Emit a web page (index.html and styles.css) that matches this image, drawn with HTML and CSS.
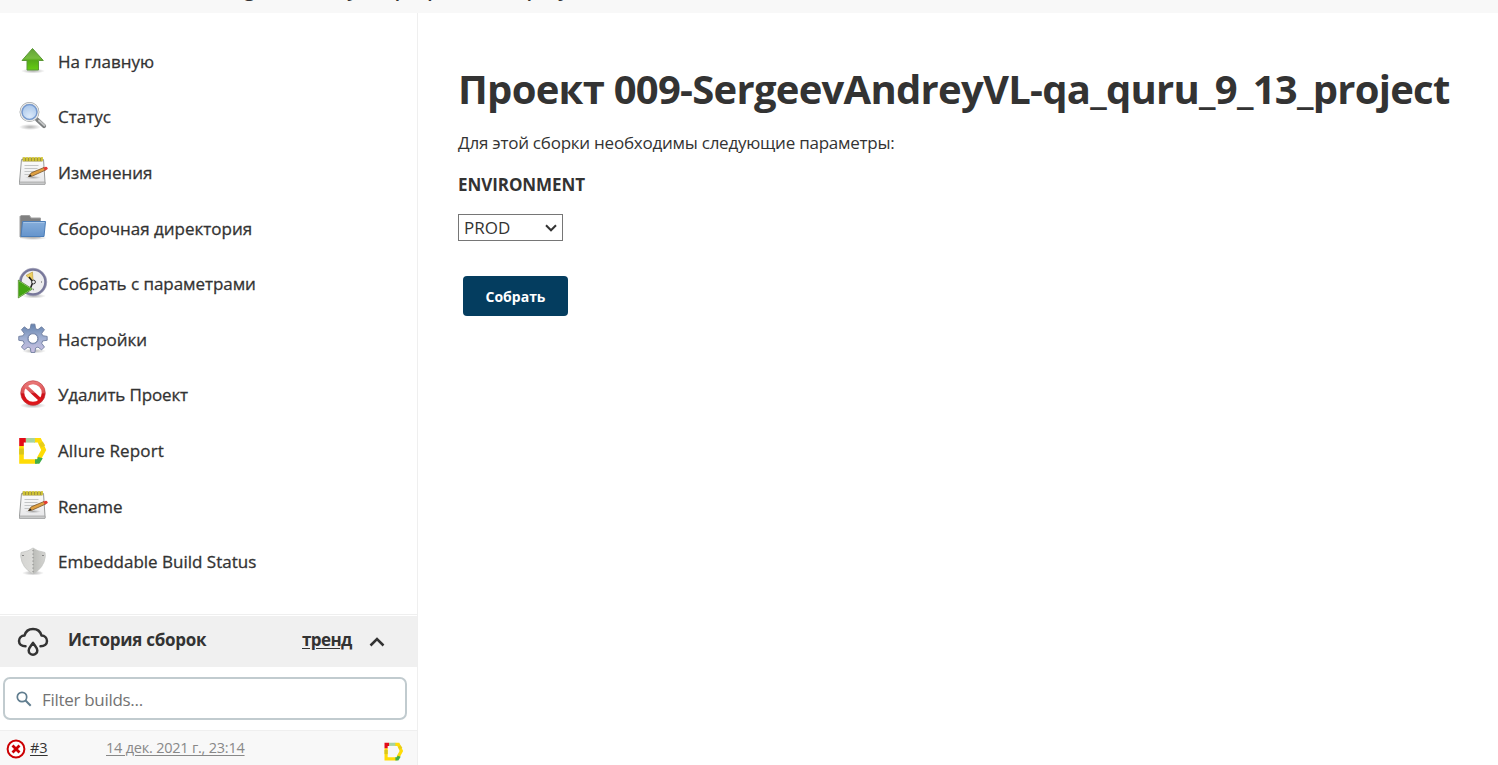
FILE: index.html
```
<!DOCTYPE html>
<html lang="ru">
<head>
<meta charset="utf-8">
<title>Проект 009-SergeevAndreyVL-qa_quru_9_13_project</title>
<link rel="stylesheet" href="styles.css">
</head>
<body>
<svg class="defs" width="0" height="0">
  <defs>
    <linearGradient id="green" x1="0" y1="0" x2="0" y2="1"><stop offset="0" stop-color="#62a238"/><stop offset=".45" stop-color="#78bd40"/><stop offset=".55" stop-color="#55aa18"/><stop offset="1" stop-color="#65cd12"/></linearGradient>
    <radialGradient id="lens" cx=".5" cy=".75" r=".7"><stop offset="0" stop-color="#dceafa"/><stop offset="1" stop-color="#a5c3e8"/></radialGradient>
    <linearGradient id="paper" x1="0" y1="0" x2="0" y2="1"><stop offset="0" stop-color="#fcfcfc"/><stop offset="1" stop-color="#e6e6e8"/></linearGradient>
    <linearGradient id="folder" x1="0" y1="0" x2="0" y2="1"><stop offset="0" stop-color="#86aedb"/><stop offset="1" stop-color="#6594cc"/></linearGradient>
    <linearGradient id="gear" x1="0" y1="0" x2="0" y2="1"><stop offset="0" stop-color="#6482ae"/><stop offset=".5" stop-color="#a1b0d2"/><stop offset="1" stop-color="#cbc0e2"/></linearGradient>
    <linearGradient id="stop" x1="0" y1="0" x2="0" y2="1"><stop offset="0" stop-color="#e87575"/><stop offset=".48" stop-color="#dc4d50"/><stop offset=".55" stop-color="#cd1119"/><stop offset="1" stop-color="#df161b"/></linearGradient>
    <linearGradient id="shield" x1="0" y1="0" x2="1" y2="0"><stop offset="0" stop-color="#d5d5d2"/><stop offset=".5" stop-color="#dcdcd9"/><stop offset=".52" stop-color="#bcbdb9"/><stop offset="1" stop-color="#d4d4d1"/></linearGradient>
    <radialGradient id="shade"><stop offset="0" stop-color="#000" stop-opacity=".3"/><stop offset="1" stop-color="#000" stop-opacity="0"/></radialGradient>
    <symbol id="notepad" viewBox="0 0 32 32">
      <path d="M4.500 3.500h22l1.500 22.500v2H2.500v-2z" fill="url(#paper)" stroke="#999b9b"/>
      <path d="M2.500 26h25.500v2.500H2.500z" fill="#c8c9ca" stroke="#a0a2a2" stroke-width=".7"/>
      <path d="M7.500 9.500h14M7.500 12.500h13M7.500 15.500h12M7.500 18.500h6" stroke="#c3c5c6"/>
      <path d="M5.500 1.500h20v4h-20z" fill="#a0943a"/>
      <path d="M7 1v4M10 1v4M13 1v4M16 1v4M19 1v4M22 1v4M25 1v4" stroke="#d9cc35" stroke-width="1.600"/>
      <ellipse cx="16" cy="21.500" rx="8" ry="1.600" fill="url(#shade)"/>
      <path d="M11.500 20.500l2.800-3.700L27 11.500l1.700 2.500-13.200 6z" fill="#dfa043" stroke="#79552b" stroke-width=".8"/>
      <path d="M11.200 21l2-2.500 1.600 1.800z" fill="#222"/>
      <path d="M26.200 11.700l2-.8q2-.3 2.400 1.300l-.4 1.200-2.200 1z" fill="#e33b34"/>
    </symbol>
    <symbol id="allure" viewBox="0 0 32 32">
      <path d="M4.500 12v15.500H20" fill="none" stroke="#ffdc05" stroke-width="4.600"/>
      <path d="M2.200 14.500h4.600v6H2.200z" fill="#d9c61c"/>
      <path d="M17 6.300h5.300L26.700 16l-5 9" fill="none" stroke="#ffdc05" stroke-width="4.600"/>
      <path d="M21.700 10l4-2.500 2.500 4-4 2z" fill="#e8cd19"/>
      <path d="M8.500 4H18v4.600H8.500z" fill="#a6d3a1"/>
      <path d="M2.200 4h6.600v4.600H6.800V12H2.200z" fill="#e30b17"/>
      <path d="M18 29.800v-4.600h2l1.300-2.300 4.500 1.300-3.500 5.600z" fill="#42ae49"/>
    </symbol>
  </defs>
</svg>

<header class="breadcrumbs"><span class="crumb">009-SergeevAndreyVL-qa_quru_9_13_project</span></header>
<div class="page">
  <aside class="side">
    <nav class="tasks">
      <a class="task"><svg viewBox="0 0 32 32"><ellipse cx="16" cy="26" rx="12" ry="2.500" fill="url(#shade)"/><path d="M15.500 3.500L26.300 15.500H21.500v9.500H10V15.500H5z" fill="url(#green)" stroke="#5b9836"/></svg><span class="label l1">На главную</span></a>
      <a class="task"><svg viewBox="0 0 32 32"><ellipse cx="13" cy="27" rx="11" ry="3" fill="url(#shade)"/><path d="M20 19.500l7 6.500" stroke="#7c7f80" stroke-width="4.200" stroke-linecap="round"/><path d="M22 20.500l5.500 5" stroke="#c4c6c6" stroke-width="1.800" stroke-linecap="round"/><circle cx="12.500" cy="12" r="8.800" fill="url(#lens)" stroke="#8b8f91" stroke-width="2.200"/><circle cx="12.500" cy="12" r="8.700" fill="none" stroke="#e5e6e6" stroke-width="1.500"/><circle cx="12.500" cy="12" r="7.400" fill="none" stroke="#7499d0" stroke-width="1.300"/></svg><span class="label l2">Статус</span></a>
      <a class="task"><svg><use href="#notepad"/></svg><span class="label l3">Изменения</span></a>
      <a class="task"><svg viewBox="0 0 32 32"><ellipse cx="16" cy="26" rx="14" ry="2" fill="url(#shade)"/><path d="M3 25V4.500l1-1h8.500l1.500 2.500h9.500V25z" fill="#808080" stroke="#a0a0a0"/><path d="M5.500 9.500h23l-1.500 15H4z" fill="url(#folder)" stroke="#4c7eb8"/><path d="M6.500 10.500h21" stroke="#a6c4e6"/></svg><span class="label l4">Сборочная директория</span></a>
      <a class="task"><svg viewBox="0 0 32 32"><ellipse cx="17" cy="29" rx="12" ry="2.500" fill="url(#shade)"/><circle cx="16" cy="15" r="12.500" fill="#ededee" stroke="#77779a" stroke-width="2.600"/><circle cx="16" cy="15" r="13.800" fill="none" stroke="#9b9bb2" stroke-width=".6"/><path d="M16 14.500L9 8.500 15.500 5z" fill="#edcf62" stroke="#b89831" stroke-width=".6"/><path d="M16 15l-4-5M16 15l-2.500 6" stroke="#222" stroke-width="1.600"/><circle cx="16.500" cy="15" r="1.900" fill="#eee" stroke="#333"/><path d="M24 15h1M16 22.500h1" stroke="#888" stroke-width="1.500"/><path d="M1.500 13.500v17L15 22z" fill="#43a512" stroke="#a7d47f" stroke-width="1"/><path d="M1.300 13v18L15.500 22z" fill="none" stroke="#397b17" stroke-width=".6"/></svg><span class="label l5">Собрать с параметрами</span></a>
      <a class="task"><svg viewBox="0 0 32 32"><ellipse cx="17" cy="28" rx="12" ry="2.500" fill="url(#shade)"/><path transform="translate(.6 -.3) scale(.96)" fill-rule="evenodd" d="M14 1.500h4l.7 4.700 2.500 1 3.800-2.900 3 3-2.900 3.800 1 2.400 4.700.8v4l-4.700.7-1 2.500 2.900 3.800-3 3-3.800-2.900-2.500 1-.7 4.600h-4l-.8-4.600-2.400-1L7 28.300l-3-3 2.900-3.800-1-2.500-4.700-.7v-4l4.700-.8 1-2.400L4 7.300l3-3 3.800 2.900 2.400-1zM16 11.500a5 5 0 1 0 0 10 5 5 0 0 0 0-10z" fill="url(#gear)" stroke="#6c7b9c" stroke-width=".9"/><circle cx="16" cy="15.500" r="5.300" fill="none" stroke="#8292b6"/></svg><span class="label l6">Настройки</span></a>
      <a class="task"><svg viewBox="0 0 32 32"><ellipse cx="16" cy="27.500" rx="13" ry="3" fill="url(#shade)"/><circle cx="16" cy="15" r="10.500" fill="#fff" stroke="url(#stop)" stroke-width="3.600"/><path d="M8.500 8l15 14" stroke="url(#stop)" stroke-width="3.600"/><circle cx="16" cy="15" r="12.300" fill="none" stroke="#b9383c" stroke-width=".6"/></svg><span class="label l7">Удалить Проект</span></a>
      <a class="task"><svg><use href="#allure"/></svg><span class="label l8">Allure Report</span></a>
      <a class="task"><svg><use href="#notepad"/></svg><span class="label l9">Rename</span></a>
      <a class="task"><svg viewBox="0 0 32 32"><ellipse cx="16" cy="28" rx="11" ry="2.500" fill="url(#shade)"/><path d="M16 3q-4 3.300-12 4.500l-.3 4Q5 23 16 29 27 23 28.300 11.500l-.3-4Q20 6.300 16 3z" fill="url(#shield)" stroke="#c3c4c1" stroke-width=".8"/><path d="M16 5v23" stroke="#888" stroke-dasharray="1.200 2.300" stroke-width="1"/><path d="M5 10.500h2M25 10.500h2" stroke="#888"/></svg><span class="label l10">Embeddable Build Status</span></a>
    </nav>
    <section class="history">
      <div class="history-head">
        <svg class="cloud" viewBox="0 0 32 32" fill="none" stroke="#333" stroke-width="2.500" stroke-linecap="round" stroke-linejoin="round"><path d="M8.500 20.200C4.500 20.200 2 18 2 15s2.500-5.300 5.500-5.500C8.700 5 12 3 16 3s7.300 2 8.500 6.500C27.500 9.700 30 12 30 15s-2.500 5.200-6.500 5.200"/><path d="M16 16.800c-1.800 3-4.300 5-4.300 7.600a4.300 4.300 0 0 0 8.600 0c0-2.600-2.500-4.600-4.300-7.600z"/></svg>
        <span class="history-title">История сборок</span>
        <a class="trend">тренд</a>
        <svg class="chev" viewBox="0 0 16 10"><path d="M1.500 8.500L8 2l6.500 6.500" fill="none" stroke="#333" stroke-width="2.500"/></svg>
      </div>
      <div class="filter">
        <svg viewBox="0 0 16 16" fill="none" stroke="#607d8f" stroke-width="1.700"><circle cx="6" cy="6" r="4.700"/><path d="M9.300 9.300l5.400 5.400" stroke-width="2"/></svg>
        <span class="placeholder">Filter builds...</span>
      </div>
      <div class="build">
        <svg class="failed" viewBox="0 0 20 20"><circle cx="10" cy="10" r="8.400" fill="#fff" stroke="#cc0003" stroke-width="2"/><path d="M6.500 6.500l7 7M13.500 6.500l-7 7" stroke="#cc0003" stroke-width="2.800"/></svg>
        <a class="number">#3</a>
        <a class="date">14 дек. 2021 г., 23:14</a>
        <svg class="report"><use href="#allure"/></svg>
      </div>
    </section>
  </aside>
  <main class="main">
    <h1><span>Проект 009-SergeevAndreyVL-qa_quru_9_13_project</span></h1>
    <p class="intro"><span>Для этой сборки необходимы следующие параметры:</span></p>
    <div class="param"><span>ENVIRONMENT</span></div>
    <div class="select"><span>PROD</span><svg viewBox="0 0 12 8"><path d="M1 1.300l5 5 5-5" fill="none" stroke="#333" stroke-width="2"/></svg></div>
    <button class="submit" type="button"><span>Собрать</span></button>
  </main>
</div>
</body>
</html>
```
FILE: styles.css
```
* { box-sizing: border-box; }
body { margin: 0; height: 765px; overflow: hidden; background: #fff; color: #333; font-family: "Open Sans", "Noto Sans", sans-serif; font-size: 17px; display: flex; flex-direction: column; }
.defs { position: absolute; }
.breadcrumbs { height: 13px; flex: none; background: #f8f8f8; overflow: hidden; display: flex; align-items: flex-end; padding: 0 0 11px 172px; }
.crumb { font-size: 20px; line-height: 26px; font-weight: 600; white-space: nowrap; }
.page { flex: 1; display: flex; min-height: 0; }
.side { width: 418px; flex: none; border-right: 1px solid #efefef; }
.tasks { height: 601px; padding-top: 20px; }
.task { display: flex; align-items: center; height: 55.6px; padding-left: 17px; gap: 9px; white-space: nowrap; -webkit-text-stroke: .3px #333; }
.task svg { width: 32px; height: 32px; flex: none; -webkit-text-stroke: 0; }
.label { line-height: 24px; padding-top: 2px; }
.l5 { letter-spacing: -.05px; }
.l7 { letter-spacing: -.15px; }
.l8 { letter-spacing: .12px; }
.l9 { letter-spacing: -.15px; }
.history { border-top: 1px solid #efefef; padding-top: 1px; }
.history-head { height: 51px; background: #f0f0f0; display: flex; align-items: center; padding-left: 17px; font-weight: 700; line-height: 24px; }
.cloud { width: 32px; height: 32px; margin-right: 19px; }
.history-title { width: 234px; white-space: nowrap; letter-spacing: -.25px; padding-bottom: 3px; }
.trend { width: 50px; text-decoration: underline; text-underline-offset: 2px; white-space: nowrap; letter-spacing: -.6px; padding-bottom: 3px; }
.chev { width: 16px; height: 10px; margin-left: 17px; }
.filter { height: 43px; width: 404px; margin: 10px 0 10px 3px; border: 2px solid #c1cbcf; border-radius: 7px; display: flex; align-items: center; padding-left: 11px; color: #737373; }
.filter svg { width: 16px; height: 16px; margin-right: 10px; }
.placeholder { letter-spacing: -.3px; padding-top: 1px; }
.build { height: 38px; border-top: 1px solid #efefef; background: #f8f8f8; display: flex; align-items: flex-start; padding-left: 6px; font-size: 14.5px; line-height: 20px; }
.build a { text-decoration: underline; white-space: nowrap; margin-top: 7px; text-underline-offset: 2px; }
.failed { width: 20px; height: 20px; margin-top: 8px; flex: none; }
.number { width: 76px; padding-left: 4px; }
.date { width: 280px; padding-left: 4px; color: #888; letter-spacing: -.22px; }
.report { width: 22px; height: 22px; margin: 9px 0 0 1px; flex: none; }
.main { padding: 48px 0 0 40px; display: flex; flex-direction: column; align-items: flex-start; white-space: nowrap; }
h1 { margin: 0; font-size: 40px; line-height: 56px; font-weight: 700; letter-spacing: -.73px; }
.intro { margin: 14px 0 0; line-height: 24px; letter-spacing: -.24px; }
.param { margin-top: 18px; line-height: 24px; font-weight: 700; letter-spacing: -.07px; }
.select { margin-top: 17px; width: 105px; height: 27px; border: 1px solid #767676; display: flex; align-items: center; justify-content: space-between; padding: 0 5px; }
.select svg { width: 12px; height: 8px; }
.submit { margin: 35px 0 0 5px; width: 105px; height: 40px; border: 0; border-radius: 4px; background: #043d5f; color: #fff; font: 700 14px "Open Sans", sans-serif; padding: 0; }
```
